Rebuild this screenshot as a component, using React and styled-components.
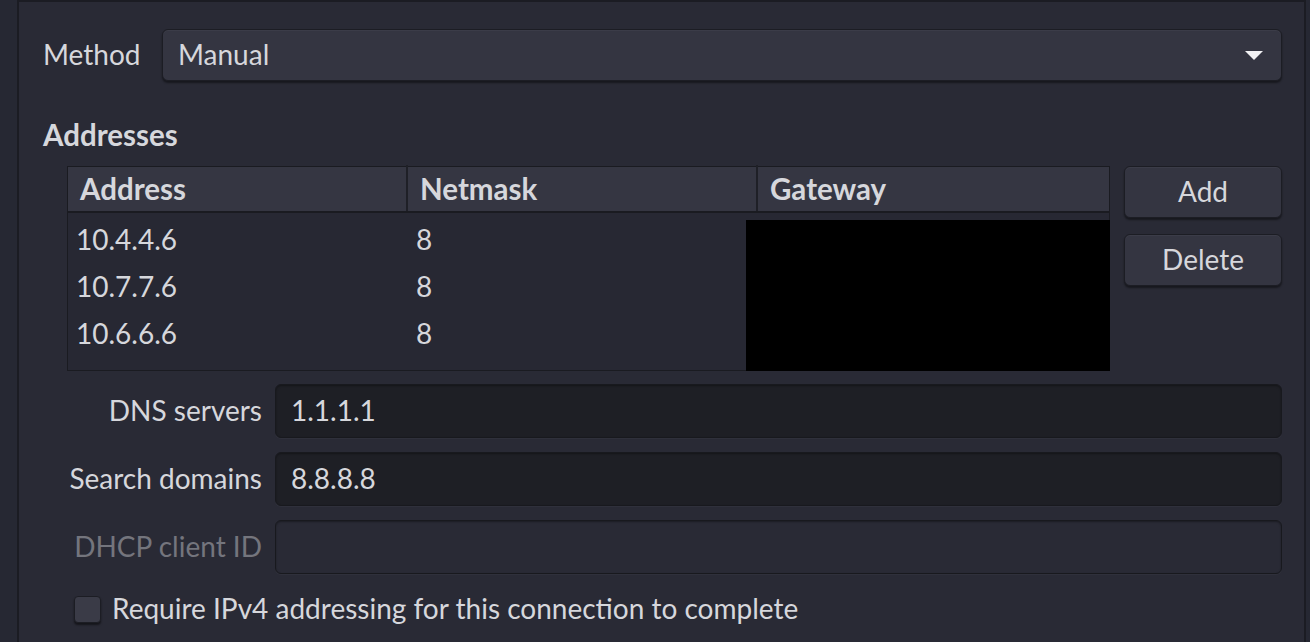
import styled, { createGlobalStyle } from "styled-components";

const GlobalStyle = createGlobalStyle`
	html, body {
		margin: 0;
		padding: 0;
		background: #262833;
		font-family: Lato, "Noto Sans", sans-serif;
		color: #d6d7dc;
	}
	#root {
		height: 642px;
		overflow: hidden;
	}
`;

const addresses = [
	{ address: "10.4.4.6", netmask: "8" },
	{ address: "10.7.7.6", netmask: "8" },
	{ address: "10.6.6.6", netmask: "8" },
];

const App = () => {
	return (
		<>
			<GlobalStyle />
			<Outer>
				<Panel>
					<MethodRow>
						<MethodLabel>Method</MethodLabel>
						<Combo>
							<span>Manual</span>
							<Arrow />
						</Combo>
					</MethodRow>

					<Heading>Addresses</Heading>

					<TableRow>
						<Table>
							<HeaderRow>
								<HeaderCell>Address</HeaderCell>
								<HeaderCell>Netmask</HeaderCell>
								<HeaderCell $last>Gateway</HeaderCell>
							</HeaderRow>
							<Body>
								{addresses.map(row => (
									<BodyRow key={row.address}>
										<Cell>{row.address}</Cell>
										<Cell>{row.netmask}</Cell>
										<Cell />
									</BodyRow>
								))}
								<Redaction />
							</Body>
						</Table>
						<Buttons>
							<Button>Add</Button>
							<Button>Delete</Button>
						</Buttons>
					</TableRow>

					<Form>
						<FieldLabel>DNS servers</FieldLabel>
						<Input>1.1.1.1</Input>
						<FieldLabel>Search domains</FieldLabel>
						<Input>8.8.8.8</Input>
						<FieldLabel $disabled>DHCP client ID</FieldLabel>
						<Input $disabled />
					</Form>

					<CheckRow>
						<Checkbox />
						<span>Require IPv4 addressing for this connection to complete</span>
					</CheckRow>
				</Panel>
			</Outer>
		</>
	);
};
export default App;

const Outer = styled.div`
	padding-left: 17px;
	width: 1289px;
`;

const Panel = styled.div`
	height: 660px;
	background: #292a35;
	border: 2px solid #1b1c23;
	border-bottom: none;
	padding: 27px 22px 0 24px;
	display: flex;
	flex-direction: column;
	font-size: 28px;
`;

const MethodRow = styled.div`
	display: flex;
	align-items: center;
	height: 52px;
`;

const MethodLabel = styled.div`
	width: 119px;
	flex-shrink: 0;
	margin-top: -2px;
`;

const Combo = styled.div`
	flex: 1;
	height: 50px;
	display: flex;
	align-items: center;
	justify-content: space-between;
	padding: 0 18px 0 15px;
	background: #343541;
	border: 1px solid #1c1d24;
	border-radius: 6px;
	box-shadow: 0 2px 2px rgba(0, 0, 0, 0.45), inset 0 1px 0 rgba(255, 255, 255, 0.04);

	span {
		margin-top: -2px;
	}
`;

const Arrow = styled.div`
	width: 0;
	height: 0;
	border-left: 9px solid transparent;
	border-right: 9px solid transparent;
	border-top: 9px solid #f2f2f4;
`;

const Heading = styled.div`
	margin-top: 37px;
	height: 34px;
	line-height: 34px;
	font-weight: 700;
	font-size: 29.5px;
`;

const TableRow = styled.div`
	display: flex;
	gap: 14px;
	margin-top: 14px;
	padding-left: 24px;
`;

const Table = styled.div`
	width: 1043px;
	height: 205px;
	background: #272833;
	border: 1px solid #1a1b21;
	display: flex;
	flex-direction: column;
	box-sizing: border-box;
`;

const HeaderRow = styled.div`
	display: grid;
	grid-template-columns: 340px 350px 1fr;
	height: 44px;
	background: #353642;
	border-bottom: 2px solid #1a1b21;
`;

const HeaderCell = styled.div`
	display: flex;
	align-items: center;
	padding-left: 12px;
	font-weight: 700;
	font-size: 29.5px;
	margin-top: -2px;
	border-right: ${({ $last }) => ($last ? "none" : "2px solid #1f2027")};
`;

const Body = styled.div`
	position: relative;
	flex: 1;
	padding-top: 2px;
`;

const BodyRow = styled.div`
	display: grid;
	grid-template-columns: 340px 350px 1fr;
	height: 47px;
`;

const Cell = styled.div`
	display: flex;
	align-items: center;
	padding-left: 8px;
`;

const Redaction = styled.div`
	position: absolute;
	left: 678px;
	right: -1px;
	top: 7px;
	bottom: -1px;
	background: #000;
`;

const Buttons = styled.div`
	display: flex;
	flex-direction: column;
	gap: 16px;
	width: 158px;
`;

const Button = styled.div`
	height: 52px;
	display: flex;
	align-items: center;
	justify-content: center;
	padding-bottom: 3px;
	background: #343541;
	border: 1px solid #1c1d24;
	border-radius: 6px;
	box-shadow: 0 2px 2px rgba(0, 0, 0, 0.45), inset 0 1px 0 rgba(255, 255, 255, 0.04);
	box-sizing: border-box;
`;

const Form = styled.div`
	display: grid;
	grid-template-columns: 195px 1fr;
	column-gap: 13px;
	row-gap: 14px;
	margin-top: 13px;
	padding-left: 24px;
`;

const FieldLabel = styled.div`
	display: flex;
	align-items: center;
	justify-content: flex-end;
	white-space: nowrap;
	padding-bottom: 3px;
	color: ${({ $disabled }) => ($disabled ? "#74757d" : "#d6d7dc")};
`;

const Input = styled.div`
	height: 54px;
	box-sizing: border-box;
	display: flex;
	align-items: center;
	padding: 0 0 3px 15px;
	background: ${({ $disabled }) => ($disabled ? "#292a35" : "#1e1f25")};
	border: 1px solid #18191e;
	border-radius: 6px;
	box-shadow: inset 0 1px 2px rgba(0, 0, 0, 0.35), 0 1px 0 rgba(255, 255, 255, 0.03);
`;

const CheckRow = styled.div`
	display: flex;
	align-items: center;
	gap: 11px;
	margin-top: 19px;
	padding-left: 31px;

	span {
		margin-top: -2px;
	}
`;

const Checkbox = styled.div`
	width: 27px;
	height: 27px;
	flex-shrink: 0;
	box-sizing: border-box;
	background: #3a3b47;
	border: 1px solid #1c1d24;
	border-radius: 4px;
	box-shadow: 0 2px 2px rgba(0, 0, 0, 0.5);
`;
